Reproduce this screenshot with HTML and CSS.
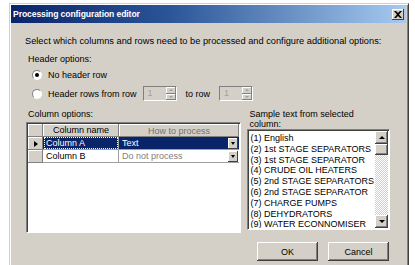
FILE: index.html
```html
<!DOCTYPE html>
<html lang="en">
<head>
  <meta charset="UTF-8">
  <title>Processing configuration editor</title>
  <link rel="stylesheet" href="styles.css">
</head>
<body>
  <div class="window">
    <div class="titlebar">
      <span class="title">Processing configuration editor</span>
      <span class="close">
        <svg width="8" height="7" viewBox="0 0 8 7"><path d="M0 0h2l2 2 2-2h2L5 3.5 8 7H6L4 5 2 7H0l3-3.5z" fill="#000"/></svg>
      </span>
    </div>
    <div class="content">
      <p class="intro">Select which columns and rows need to be processed and configure additional options:</p>
      <p class="group-label">Header options:</p>
      <div class="radio-row">
        <span class="radio checked"></span>
        <span>No header row</span>
      </div>
      <div class="radio-row">
        <span class="radio"></span>
        <span>Header rows from row</span>
        <span class="spin"><span class="spin-val">1</span><span class="spin-btns"><i class="up"></i><i class="down"></i></span></span>
        <span class="to">to row</span>
        <span class="spin"><span class="spin-val">1</span><span class="spin-btns"><i class="up"></i><i class="down"></i></span></span>
      </div>

      <div class="panes">
        <div class="left">
          <p class="pane-label">Column options:</p>
          <div class="grid">
            <div class="grow head">
              <div class="rh"></div>
              <div class="c1">Column name</div>
              <div class="c2">How to process</div>
            </div>
            <div class="grow sel">
              <div class="rh"><span class="arrow"></span></div>
              <div class="c1"><span class="focus">Column A</span></div>
              <div class="c2"><span>Text</span><span class="drop"></span></div>
            </div>
            <div class="grow">
              <div class="rh"></div>
              <div class="c1">Column B</div>
              <div class="c2 muted"><span>Do not process</span><span class="drop"></span></div>
            </div>
          </div>
        </div>
        <div class="right">
          <p class="pane-label">Sample text from selected column:</p>
          <div class="listbox">
            <ul class="items">
              <li>(1) English</li>
              <li>(2) 1st STAGE SEPARATORS</li>
              <li>(3) 1st STAGE SEPARATOR</li>
              <li>(4) CRUDE OIL HEATERS</li>
              <li>(5) 2nd STAGE SEPARATORS</li>
              <li>(6) 2nd STAGE SEPARATOR</li>
              <li>(7) CHARGE PUMPS</li>
              <li>(8) DEHYDRATORS</li>
              <li>(9) WATER ECONNOMISER</li>
            </ul>
            <div class="vscroll">
              <span class="sbtn"><i class="up"></i></span>
              <span class="thumb"></span>
              <span class="track"></span>
              <span class="sbtn"><i class="down"></i></span>
            </div>
          </div>
        </div>
      </div>

      <div class="buttons">
        <button class="btn">OK</button>
        <button class="btn">Cancel</button>
      </div>
    </div>
  </div>
</body>
</html>
```

FILE: styles.css
```css
body {
  margin: 0;
  background: #fff;
  font-family: "Liberation Sans", Arial, sans-serif;
  font-size: 9px;
  color: #000;
  overflow: hidden;
}

p {
  margin: 0;
}

.window {
  margin: 3px 0 0 9px;
  width: 400px;
  height: 262px;
  background: #d4d0c8;
  border: 1px solid #d4d0c8;
  border-right-color: #404040;
  border-bottom: none;
  box-shadow: inset 1px 1px 0 #fff, inset -1px 0 0 #808080;
  padding: 1px 2px 0 1px;
  box-sizing: border-box;
  overflow: hidden;
}

.titlebar {
  height: 18px;
  background: linear-gradient(to right, #0a246a, #2a5597 40%, #a6caf0);
  display: flex;
  align-items: center;
  justify-content: space-between;
  padding: 0 2px 0 2px;
}

.title {
  color: #fff;
  font-weight: bold;
  font-size: 8.6px;
  font-family: "Liberation Sans", Arial, sans-serif;
  letter-spacing: -0.1px;
}

.close {
  width: 12px;
  height: 11px;
  background: #d4d0c8;
  box-shadow: inset -1px -1px 0 #404040, inset 1px 1px 0 #fff;
  display: flex;
  align-items: center;
  justify-content: center;
}

.content {
  padding: 12px 16px 0 14px;
}

.intro {
  font-size: 9.25px;
  line-height: 12px;
}

.group-label {
  margin: 6px 0 0 3px;
  line-height: 12px;
}

.radio-row {
  display: flex;
  align-items: center;
  height: 19px;
  margin-left: 4px;
}

.radio {
  width: 10px;
  height: 10px;
  border-radius: 50%;
  background: #fff;
  border: 1px solid #808080;
  border-bottom-color: #fff;
  border-right-color: #fff;
  box-sizing: border-box;
  margin: 0 6px 0 3px;
  position: relative;
}

.radio.checked::after {
  content: "";
  position: absolute;
  left: 2px;
  top: 2px;
  width: 4px;
  height: 4px;
  border-radius: 50%;
  background: #000;
}

.spin {
  display: flex;
  width: 34px;
  height: 15px;
  margin-left: 6px;
  border: 1px solid #808080;
  border-right-color: #fff;
  border-bottom-color: #fff;
  background: #d4d0c8;
  box-sizing: border-box;
}

.spin-val {
  flex: 1;
  color: #a0a0a0;
  padding-left: 4px;
  line-height: 13px;
}

.spin-btns {
  width: 10px;
  display: flex;
  flex-direction: column;
}

.spin-btns i,
.sbtn {
  flex: 1;
  display: flex;
  align-items: center;
  justify-content: center;
  background: #d4d0c8;
  box-shadow: inset -1px -1px 0 #808080, inset 1px 1px 0 #fff;
}

.spin-btns i::before,
.sbtn i::before,
.drop::before {
  content: "";
  border-left: 2px solid transparent;
  border-right: 2px solid transparent;
}

.spin-btns .up::before {
  border-bottom: 2px solid #a0a0a0;
}

.spin-btns .down::before {
  border-top: 2px solid #a0a0a0;
}

.to {
  margin-left: 9px;
  margin-right: 3px;
}

.panes {
  display: flex;
  gap: 6px;
  margin-top: 6px;
}

.pane-label {
  line-height: 10px;
  margin-left: 2px;
  height: 20px;
}

.left {
  width: 217px;
  margin-left: 1px;
}

.left .pane-label {
  height: 13px;
}

.grid {
  height: 111px;
  background: #fff;
  border: 1px solid #808080;
  border-right-color: #fff;
  border-bottom-color: #fff;
  box-shadow: inset 1px 1px 0 #404040;
  padding: 1px 0 0 1px;
  box-sizing: border-box;
}

.grow {
  display: flex;
  height: 13px;
  line-height: 12px;
}

.rh {
  width: 15px;
  background: #d4d0c8;
  box-shadow: inset -1px -1px 0 #808080, inset 1px 1px 0 #fff;
  display: flex;
  align-items: center;
  justify-content: center;
}

.c1 {
  width: 76px;
  padding-left: 3px;
  box-sizing: border-box;
  border-right: 1px solid #a0a0a0;
  border-bottom: 1px solid #a0a0a0;
}

.c2 {
  width: 120px;
  padding-left: 3px;
  box-sizing: border-box;
  display: flex;
  justify-content: space-between;
  align-items: center;
  border-bottom: 1px solid #a0a0a0;
}

.head .c1,
.head .c2 {
  background: #d4d0c8;
  border: none;
  box-shadow: inset -1px -1px 0 #808080, inset 1px 1px 0 #fff;
  justify-content: center;
  text-align: center;
  padding-left: 0;
}

.head .c2 {
  color: #707070;
}

.sel .c1,
.sel .c2 {
  background: #0a246a;
  color: #fff;
}

.sel .c1 {
  padding-left: 1px;
}

.focus {
  display: block;
  height: 12px;
  padding-left: 2px;
  outline: 1px dotted #fff;
  outline-offset: -1px;
}

.muted {
  color: #808080;
}

.arrow {
  border-top: 3px solid transparent;
  border-bottom: 3px solid transparent;
  border-left: 4px solid #000;
}

.drop {
  width: 10px;
  height: 11px;
  background: #d4d0c8;
  box-shadow: inset -1px -1px 0 #404040, inset 1px 1px 0 #fff;
  display: flex;
  align-items: center;
  justify-content: center;
  margin-right: 1px;
}

.drop::before {
  border-top: 3px solid #000;
}

.right {
  width: 145px;
}

.right .pane-label {
  margin-left: 3px;
  width: 120px;
}

.listbox {
  display: flex;
  height: 101px;
  background: #fff;
  border: 1px solid #808080;
  border-right-color: #fff;
  border-bottom-color: #fff;
  box-shadow: inset 1px 1px 0 #404040;
  box-sizing: border-box;
  padding: 2px 1px 1px 2px;
}

.items {
  flex: 1;
  list-style: none;
  margin: 0;
  padding: 1px 0 0 1px;
  overflow: hidden;
}

.items li {
  height: 10.8px;
  line-height: 10.8px;
  font-size: 9px;
  white-space: nowrap;
}

.vscroll {
  width: 13px;
  display: flex;
  flex-direction: column;
  margin-top: -1px;
}

.sbtn {
  flex: 0 0 13px;
  box-shadow: inset -1px -1px 0 #404040, inset 1px 1px 0 #fff, inset -2px -2px 0 #808080;
}

.sbtn .up::before {
  border-bottom: 3px solid #000;
  border-left-width: 3px;
  border-right-width: 3px;
  display: block;
}

.sbtn .down::before {
  border-top: 3px solid #000;
  border-left-width: 3px;
  border-right-width: 3px;
  display: block;
}

.thumb {
  flex: 0 0 11px;
  background: #d4d0c8;
  box-shadow: inset -1px -1px 0 #404040, inset 1px 1px 0 #fff, inset -2px -2px 0 #808080;
}

.track {
  flex: 1;
  background-color: #fff;
  background-image: repeating-conic-gradient(#d4d0c8 0 25%, #fff 0 50%);
  background-size: 2px 2px;
}

.buttons {
  display: flex;
  justify-content: flex-end;
  gap: 10px;
  margin-top: 9px;
  padding-right: 1px;
}

.btn {
  width: 61px;
  height: 19px;
  font-family: "Liberation Sans", Arial, sans-serif;
  font-size: 9px;
  background: #d4d0c8;
  border: none;
  box-shadow: inset -1px -1px 0 #404040, inset 1px 1px 0 #fff, inset -2px -2px 0 #808080;
  padding: 0;
}
```
